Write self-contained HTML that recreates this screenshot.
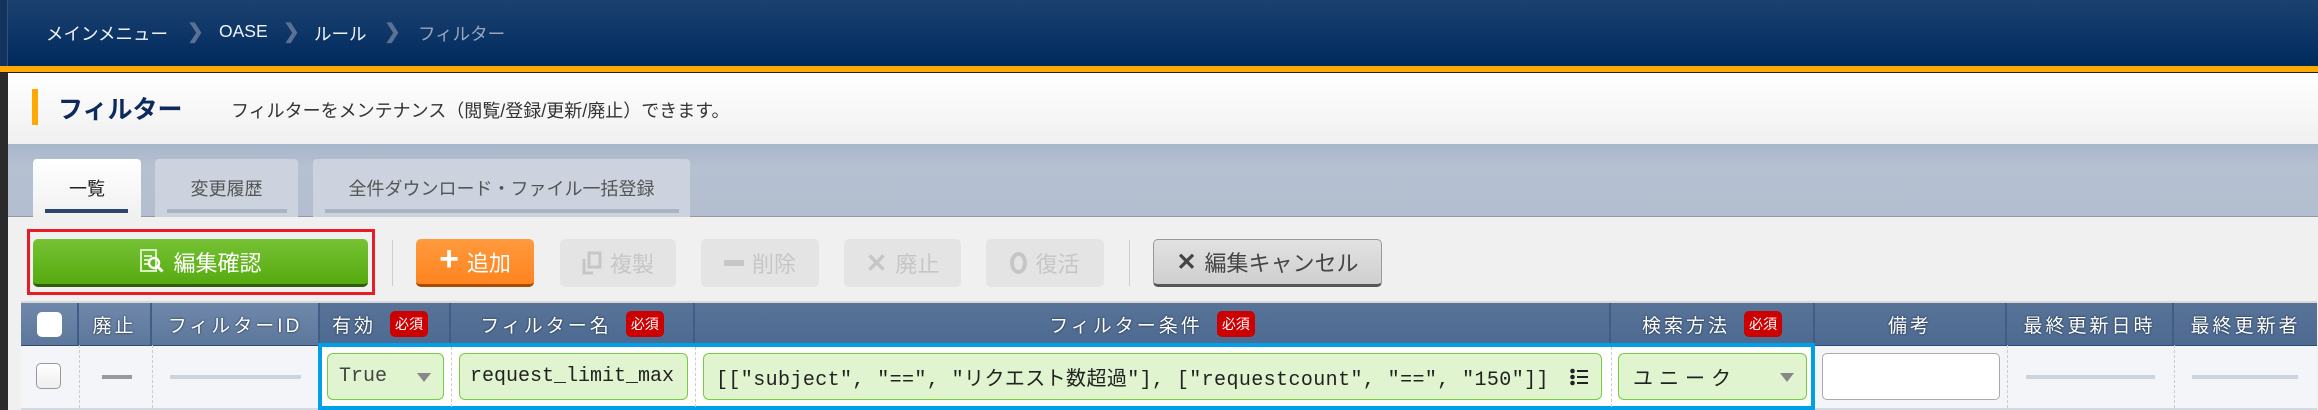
<!DOCTYPE html>
<html><head><meta charset="utf-8"><style>
*{box-sizing:border-box;margin:0;padding:0}
body{width:2318px;height:410px;overflow:hidden;position:relative;background:#f0f0f0;font-family:"Liberation Sans","Noto Sans CJK JP",sans-serif}
.a{position:absolute}
.hdr{left:0;top:0;width:2318px;height:66px;background:linear-gradient(#1b416f,#002a5e)}
.bc{top:21px;font-size:17.5px;color:#f0f4fa;white-space:nowrap}
.chev{top:19px;font-size:20px;color:#5a7194;font-weight:bold}
.btn{top:239px;height:48px;border-radius:5px;font-size:22px;display:flex;align-items:center;justify-content:center;gap:8px}
.dis{background:#e4e4e4;color:#c6c6c6}
.th{top:303px;height:42px;color:#fff;font-size:19px;letter-spacing:3px;display:flex;align-items:center;justify-content:center;border-right:2px solid #3f5d86;text-shadow:0 0 2px #123;white-space:nowrap}
.req{display:inline-block;background:#c00;color:#fff;font-size:14px;letter-spacing:0;border-radius:5px;padding:3px 5px;margin-left:14px;text-shadow:none}
.inp{top:353px;height:47px;background:#dff4cf;border:1px solid #77cc44;border-radius:6px;font-family:"Liberation Mono","Noto Sans CJK JP",monospace;font-size:20px;color:#222;display:flex;align-items:center;white-space:nowrap;overflow:hidden}
.tri{width:0;height:0;border-left:7px solid transparent;border-right:7px solid transparent;border-top:9px solid #888;position:absolute;right:12px;top:19px}
.dash{height:4px;background:#ccd4df;top:375px}
.vd{top:345px;height:63px;border-left:1px dashed #ccc}
</style></head><body>
<div class="a hdr"></div>
<div class="a" style="left:0;top:0;width:8px;height:66px;background:#13335f;border-right:1px solid #34507a"></div>
<div class="a bc" style="left:46px">メインメニュー</div>
<div class="a chev" style="left:187px">&#x276F;</div>
<div class="a bc" style="left:219px">OASE</div>
<div class="a chev" style="left:283px">&#x276F;</div>
<div class="a bc" style="left:314px">ルール</div>
<div class="a chev" style="left:384px">&#x276F;</div>
<div class="a bc" style="left:418px;color:#98a6bd">フィルター</div>
<div class="a" style="left:0;top:66px;width:2318px;height:6px;background:#ffa800"></div>
<div class="a" style="left:0;top:72px;width:2318px;height:1px;background:#222"></div>
<div class="a" style="left:0;top:73px;width:8px;height:337px;background:#2b2b2b"></div>
<div class="a" style="left:8px;top:73px;width:2310px;height:71px;background:linear-gradient(#fff,#f0f0f0)"></div>
<div class="a" style="left:32px;top:89px;width:6px;height:36px;background:#ffa800"></div>
<div class="a" style="left:58px;top:90px;font-size:25px;font-weight:bold;color:#0c2a5c;white-space:nowrap">フィルター</div>
<div class="a" style="left:231px;top:97px;font-size:18px;color:#333;white-space:nowrap">フィルターをメンテナンス（閲覧/登録/更新/廃止）できます。</div>
<div class="a" style="left:8px;top:144px;width:2310px;height:73px;background:linear-gradient(#a8b6ca,#b5c0d1 30%,#b3bed0);border-bottom:1px solid #999"></div>
<div class="a" style="left:33px;top:159px;width:108px;height:59px;background:linear-gradient(#fff,#f0f0f0);border-radius:4px 4px 0 0;font-size:18px;color:#222;text-align:center;padding-top:16px">一覧</div>
<div class="a" style="left:45px;top:209px;width:83px;height:4px;background:#2c4670"></div>
<div class="a" style="left:155px;top:159px;width:143px;height:58px;background:#ccd3de;border-radius:4px 4px 0 0;font-size:18px;color:#555;text-align:center;padding-top:16px">変更履歴</div>
<div class="a" style="left:167px;top:209px;width:120px;height:4px;background:#aab3c1"></div>
<div class="a" style="left:313px;top:159px;width:377px;height:58px;background:#ccd3de;border-radius:4px 4px 0 0;font-size:18px;color:#555;text-align:center;padding-top:16px">全件ダウンロード・ファイル一括登録</div>
<div class="a" style="left:325px;top:209px;width:354px;height:4px;background:#aab3c1"></div>

<div class="a" style="left:27px;top:229px;width:348px;height:66px;border:3px solid #e81c24"></div>
<div class="a btn" style="left:33px;width:335px;background:linear-gradient(#76c234,#56ab10);border-bottom:3px solid #2e5e0a;color:#fff">
<svg width="26" height="28" viewBox="0 0 26 28"><rect x="2" y="2" width="15" height="21" fill="none" stroke="#d8f0c0" stroke-width="2"/><path d="M5 8h8M5 12h5M5 16h4" stroke="#d8f0c0" stroke-width="2"/><circle cx="15" cy="15" r="5" fill="none" stroke="#fff" stroke-width="2.5"/><path d="M18.5 18.5l5 5" stroke="#fff" stroke-width="3"/></svg>編集確認</div>
<div class="a" style="left:392px;top:240px;width:1px;height:46px;background:#ccc"></div>
<div class="a btn" style="left:416px;width:118px;background:linear-gradient(#ff9a3c,#ff8420);border-bottom:3px solid #a84d00;color:#fff"><span style="font-size:34px;font-weight:bold;margin-top:-4px">+</span>追加</div>
<div class="a btn dis" style="left:560px;width:116px"><svg width="20" height="24" viewBox="0 0 20 24"><path d="M2 8v14h9" fill="none" stroke="#c6c6c6" stroke-width="3"/><rect x="7" y="2" width="11" height="14" fill="none" stroke="#c6c6c6" stroke-width="3"/></svg>複製</div>
<div class="a btn dis" style="left:701px;width:118px"><span style="display:inline-block;width:20px;height:6px;background:#c6c6c6"></span>削除</div>
<div class="a btn dis" style="left:844px;width:117px"><b style="font-size:26px">✕</b>廃止</div>
<div class="a btn dis" style="left:986px;width:118px"><span style="display:inline-block;width:17px;height:22px;border:4px solid #c6c6c6;border-radius:50%"></span>復活</div>
<div class="a" style="left:1129px;top:240px;width:1px;height:46px;background:#ccc"></div>
<div class="a btn" style="left:1153px;width:229px;background:linear-gradient(#e2e2e2,#cfcfcf);border:1px solid #999;border-bottom:3px solid #555;color:#444"><b style="font-size:24px">✕</b>編集キャンセル</div>

<div class="a" style="left:21px;top:301px;width:2296px;height:2px;background:#d8d8d8"></div>
<div class="a th" style="left:21px;width:58px;background:linear-gradient(#6f88aa,#5d779c)"><span style="width:25px;height:25px;background:#fff;border-radius:5px;display:inline-block"></span></div>
<div class="a th" style="left:79px;width:73px;background:linear-gradient(#6f88aa,#5d779c)">廃止</div>
<div class="a th" style="left:152px;width:168px;background:linear-gradient(#6f88aa,#5d779c)">フィルターID</div>
<div class="a th" style="left:320px;width:131px;background:linear-gradient(#587397,#4d6a92);justify-content:flex-start;padding-left:12px">有効<span class="req">必須</span></div>
<div class="a th" style="left:451px;width:244px;background:linear-gradient(#587397,#4d6a92)">フィルター名<span class="req">必須</span></div>
<div class="a th" style="left:695px;width:916px;background:linear-gradient(#587397,#4d6a92)">フィルター条件<span class="req">必須</span></div>
<div class="a th" style="left:1611px;width:204px;background:linear-gradient(#587397,#4d6a92)">検索方法<span class="req">必須</span></div>
<div class="a th" style="left:1815px;width:192px;background:linear-gradient(#587397,#4d6a92)">備考</div>
<div class="a th" style="left:2007px;width:167px;background:linear-gradient(#587397,#4d6a92)">最終更新日時</div>
<div class="a th" style="left:2174px;width:143px;background:linear-gradient(#587397,#4d6a92);border-right:none">最終更新者</div>

<div class="a" style="left:21px;top:345px;width:2296px;height:63px;background:#f4f5f9;border-top:1px solid #2c4a78"></div>
<div class="a" style="left:21px;top:408px;width:2296px;height:2px;background:#d4d9e2"></div>
<div class="a vd" style="left:79px"></div><div class="a vd" style="left:152px"></div><div class="a vd" style="left:2007px"></div><div class="a vd" style="left:2174px"></div>
<div class="a" style="left:36px;top:363px;width:25px;height:26px;border:1px solid #999;border-radius:5px;background:linear-gradient(#fff,#eee)"></div>
<div class="a" style="left:102px;top:375px;width:30px;height:4px;background:#999"></div>
<div class="a dash" style="left:170px;width:131px"></div>
<div class="a" style="left:318px;top:343px;width:1497px;height:67px;border:4px solid #00a0e9;background:#fff"></div>
<div class="a vd" style="left:451px;top:347px;height:60px"></div><div class="a vd" style="left:695px;top:347px;height:60px"></div><div class="a vd" style="left:1611px;top:347px;height:60px"></div>
<div class="a inp" style="left:327px;width:117px;padding-left:11px;color:#444">True<span class="tri"></span></div>
<div class="a inp" style="left:459px;width:229px;padding-left:10px">request_limit_max</div>
<div class="a inp" style="left:703px;width:899px;padding-left:12px"><span style="display:block;width:850px;overflow:hidden;letter-spacing:0.4px">[["subject", "==", "リクエスト数超過"], ["requestcount", "==", "150"]]</span>
<svg class="a" style="right:13px;top:14px" width="18" height="18" viewBox="0 0 18 18"><circle cx="2.5" cy="3" r="2.3" fill="#222"/><circle cx="2.5" cy="9" r="2.3" fill="#222"/><circle cx="2.5" cy="15" r="2.3" fill="#222"/><path d="M7 3h11M7 9h11M7 15h11" stroke="#222" stroke-width="2"/></svg></div>
<div class="a inp" style="left:1618px;width:189px;padding-left:14px;font-family:'Noto Sans CJK JP',sans-serif;letter-spacing:6px">ユニーク<span class="tri"></span></div>
<div class="a" style="left:1822px;top:353px;width:178px;height:47px;background:#fff;border:1px solid #aaa;border-radius:5px"></div>
<div class="a dash" style="left:2026px;width:129px"></div>
<div class="a dash" style="left:2192px;width:106px"></div>
</body></html>
